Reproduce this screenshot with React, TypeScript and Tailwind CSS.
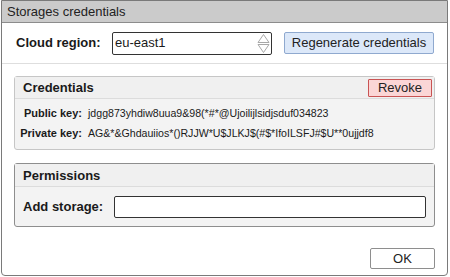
export default function App() {
  return (
    <div className="w-[450px] h-[277px] bg-white font-['Liberation_Sans',Arial,sans-serif] text-[#1a1a1a]">
      <div className="ml-[1px] w-[447px] h-[276px] border border-[#7a7a7a] rounded-b-[4px] flex flex-col overflow-hidden bg-white">
        {/* title bar */}
        <div className="h-[22px] bg-[#cbcbcb] border-b border-[#8c8c8c] flex items-center pl-[5px] text-[13px] text-[#222]">
          Storages credentials
        </div>

        {/* region row */}
        <div className="h-[41px] flex items-center pl-[14px] border-b border-[#dedede]">
          <span className="w-[96px] text-[13px] font-bold">Cloud region:</span>
          <div className="w-[160px] h-[23px] border border-[#333] rounded-[2px] flex items-center pl-[2px] text-[13px]">
            <span className="flex-1">eu-east1</span>
            <svg width="13" height="21" viewBox="0 0 13 21" className="mr-[1px]" fill="none" stroke="#a8a8a8" strokeWidth="1">
              <path d="M1 9.5 L6.5 1.5 L12 9.5 Z" />
              <path d="M1 11.5 L6.5 19.5 L12 11.5 Z" />
            </svg>
          </div>
          <button className="ml-[12px] w-[150px] h-[22px] bg-[#dce8f9] border border-[#8fa9cf] rounded-[2px] text-[13px] text-[#222]">
            Regenerate credentials
          </button>
        </div>

        {/* credentials */}
        <div className="mt-[12px] ml-[12px] w-[421px] border border-[#c6c6c6] rounded-[3px] bg-[#f3f3f3]">
          <div className="h-[22px] bg-[#f0f0f0] border-b border-[#dcdcdc] flex items-center justify-between pl-[8px] pr-[2px]">
            <span className="text-[13px] font-bold">Credentials</span>
            <button className="w-[64px] h-[18px] bg-[#fbd6d6] border border-[#c95454] rounded-[1px] text-[13px] leading-none text-[#222]">
              Revoke
            </button>
          </div>
          <div className="h-[50px] flex flex-col justify-center gap-[8px] pb-[2px] text-[11px] leading-[12px]">
            <div className="flex items-baseline">
              <span className="w-[73px] text-right font-bold pr-[6px]">Public key:</span>
              <span className="text-[10.6px]">jdgg873yhdiw8uua9&amp;98(*#*@Ujoilijlsidjsduf034823</span>
            </div>
            <div className="flex items-baseline">
              <span className="w-[73px] text-right font-bold pr-[6px]">Private key:</span>
              <span className="text-[10.6px]">AG&amp;*&amp;Ghdauiios*()RJJW*U$JLKJ$(#$*IfoILSFJ#$U**0ujjdf8</span>
            </div>
          </div>
        </div>

        {/* permissions */}
        <div className="mt-[13px] ml-[12px] w-[421px] border border-[#8e8e8e] rounded-[3px] bg-[#f3f3f3]">
          <div className="h-[23px] bg-[#f0f0f0] border-b border-[#dcdcdc] flex items-center pl-[8px] pt-[1px]">
            <span className="text-[13px] font-bold">Permissions</span>
          </div>
          <div className="h-[39px] flex items-center pl-[8px]">
            <span className="w-[91px] text-[13px] font-bold">Add storage:</span>
            <div className="w-[312px] h-[22px] border border-[#333] rounded-[2px] bg-white" />
          </div>
        </div>

        {/* footer */}
        <div className="flex-1 flex items-end justify-end pr-[12px] pb-[6px]">
          <button className="w-[65px] h-[21px] bg-white border border-[#8e8e8e] rounded-[2px] text-[13px] text-[#222]">
            OK
          </button>
        </div>
      </div>
    </div>
  );
}
